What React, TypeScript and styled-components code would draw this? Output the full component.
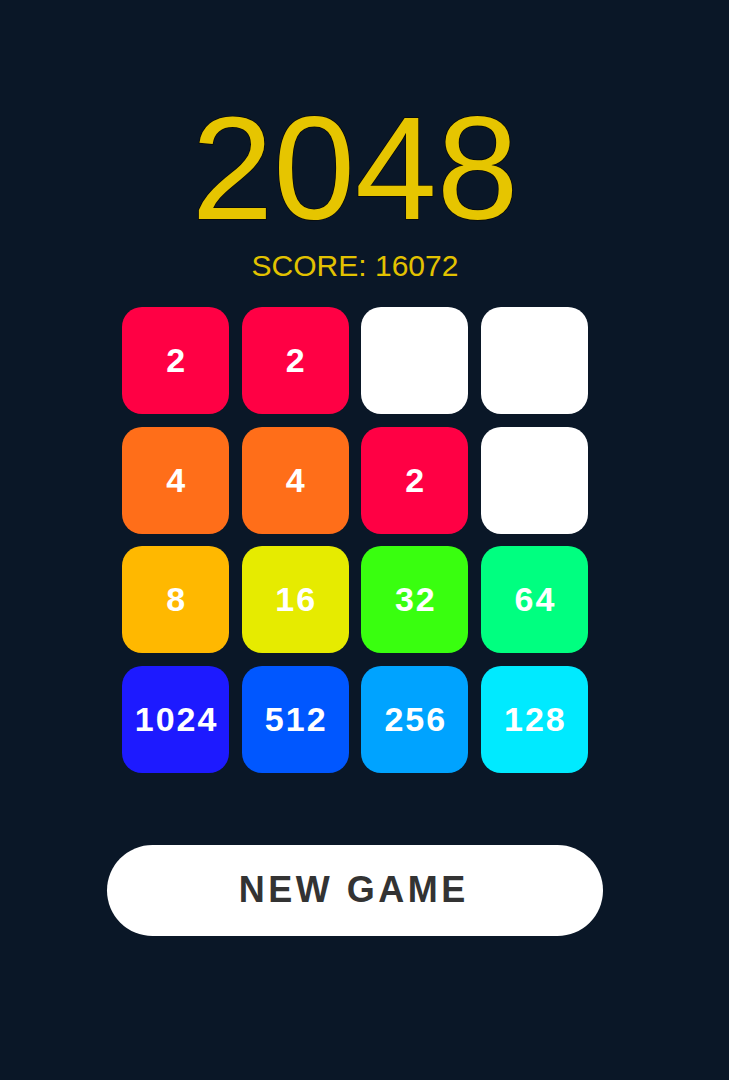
import React from "react";
import styled, { createGlobalStyle } from "styled-components";

const GlobalStyle = createGlobalStyle`
  html, body {
    margin: 0;
    padding: 0;
    background: #0a1727;
  }
  body {
    font-family: "Liberation Sans", Arial, sans-serif;
    min-height: 1080px;
  }
`;

const Page = styled.main`
  width: 710px;
  min-height: 1080px;
  display: flex;
  flex-direction: column;
  align-items: center;
  padding-top: 95px;
  box-sizing: border-box;
`;

const Title = styled.h1`
  margin: 0;
  font-family: "Liberation Sans", Arial, sans-serif;
  font-weight: 400;
  font-size: 147px;
  line-height: 1;
  color: #e6c500;
  -webkit-text-stroke: 1.5px #0a0a05;
  paint-order: stroke fill;
`;

const Score = styled.div`
  margin-top: 9px;
  font-size: 30px;
  line-height: 1;
  color: #e2c200;
`;

const Board = styled.div`
  margin-top: 26px;
  display: grid;
  grid-template-columns: repeat(4, 107px);
  grid-auto-rows: 107px;
  gap: 12.6px;
`;

const Tile = styled.div<{ $bg: string }>`
  border-radius: 20px;
  background: ${(p) => p.$bg};
  display: flex;
  align-items: center;
  justify-content: center;
  color: #ffffff;
  font-family: "Liberation Sans", Arial, sans-serif;
  font-weight: 700;
  font-size: 34px;
  letter-spacing: 2px;
  padding-left: 2px;
`;

const NewGame = styled.button`
  margin-top: 72px;
  width: 496px;
  height: 91px;
  border: none;
  border-radius: 46px;
  background: #ffffff;
  color: #333333;
  font-family: "Liberation Sans", Arial, sans-serif;
  font-weight: 700;
  font-size: 36px;
  letter-spacing: 3.5px;
  padding-left: 3.5px;
  cursor: pointer;
`;

const colors: Record<number, string> = {
  0: "#ffffff",
  2: "#ff0044",
  4: "#ff6e19",
  8: "#ffb800",
  16: "#e6eb00",
  32: "#39ff0f",
  64: "#00ff80",
  128: "#00eaff",
  256: "#00a3ff",
  512: "#0057ff",
  1024: "#1d1aff",
};

const board = [
  [2, 2, 0, 0],
  [4, 4, 2, 0],
  [8, 16, 32, 64],
  [1024, 512, 256, 128],
];

export default function App() {
  return (
    <>
      <GlobalStyle />
      <Page>
        <Title>2048</Title>
        <Score>SCORE: 16072</Score>
        <Board>
          {board.flat().map((v, i) => (
            <Tile key={i} $bg={colors[v]}>
              {v ? v : ""}
            </Tile>
          ))}
        </Board>
        <NewGame>NEW GAME</NewGame>
      </Page>
    </>
  );
}
